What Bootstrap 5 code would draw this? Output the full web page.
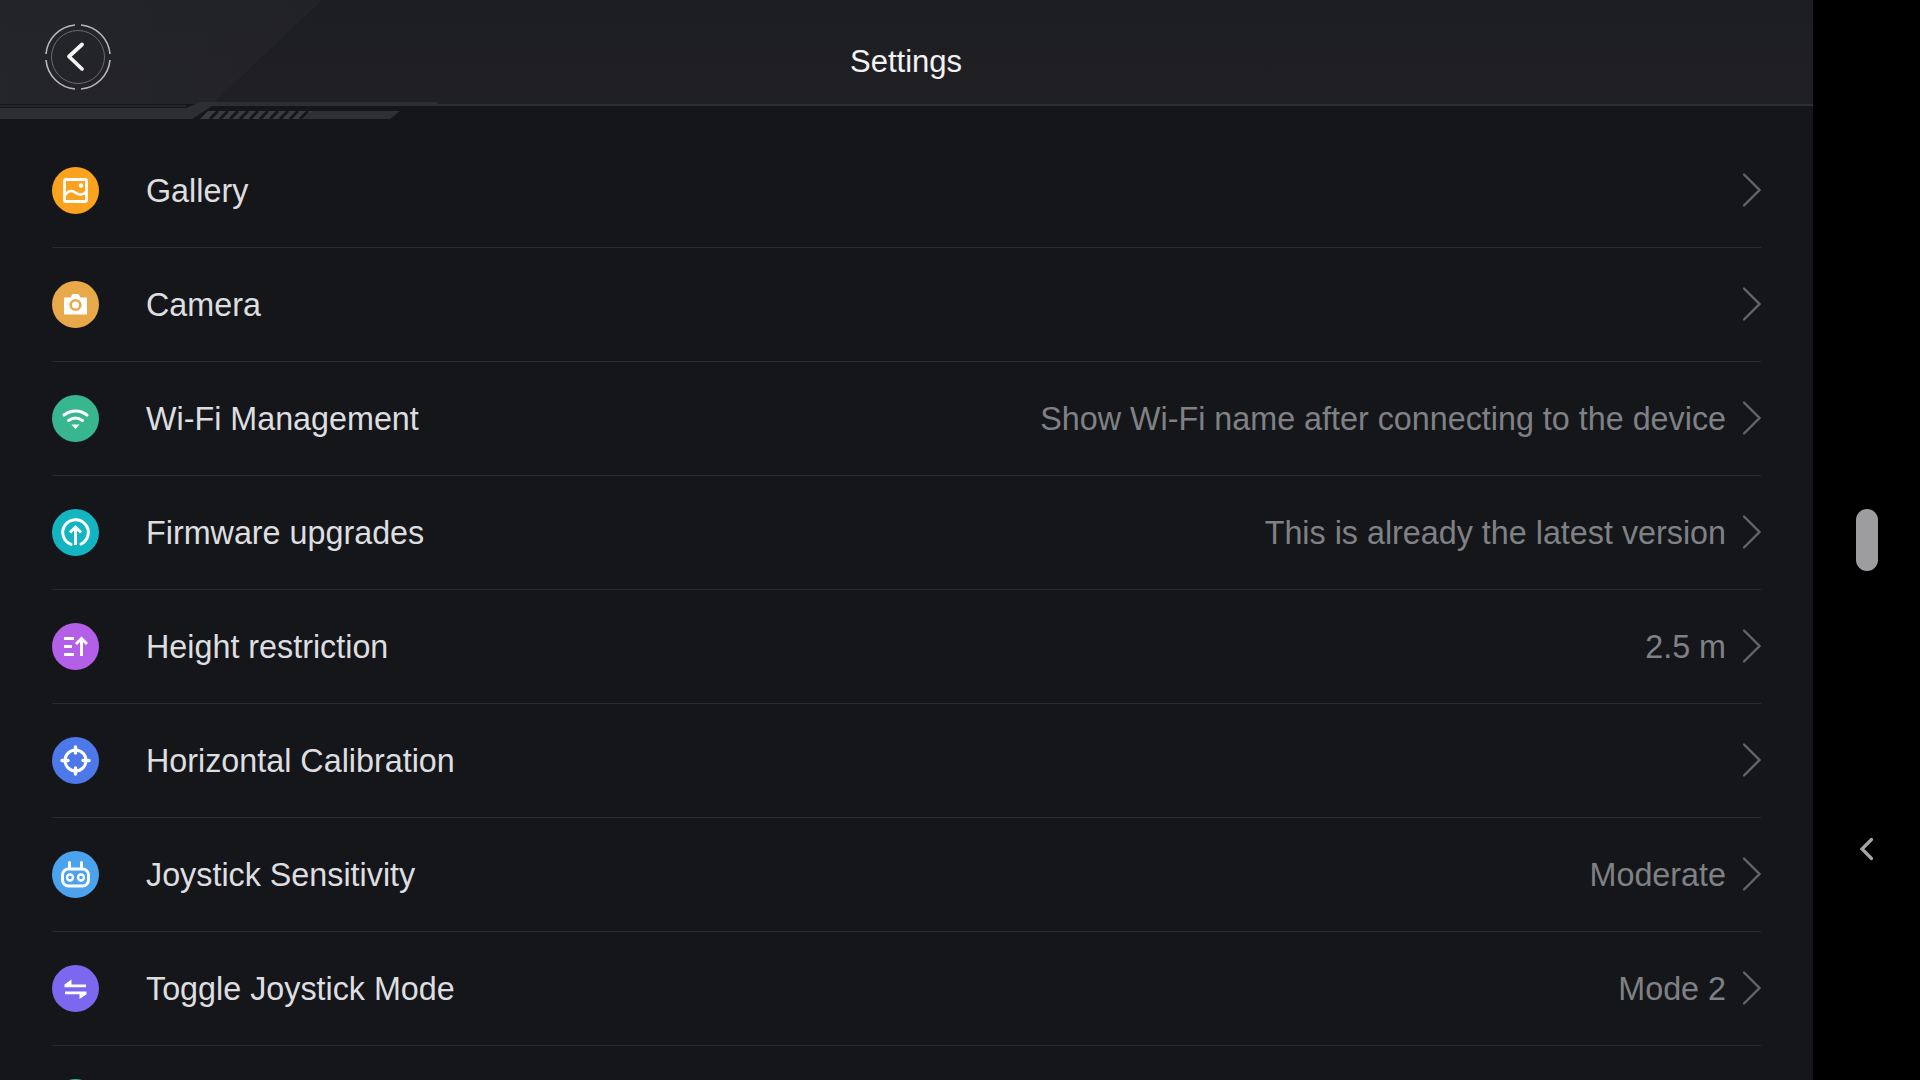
<!DOCTYPE html>
<html lang="en"><head><meta charset="utf-8"><title>Settings</title>
<link href="https://cdn.jsdelivr.net/npm/bootstrap@5.3.0/dist/css/bootstrap.min.css" rel="stylesheet">
<style>
html,body{height:1080px;overflow:hidden;background:#000;font-family:"Liberation Sans",Arial,sans-serif}
.app-shell{width:1920px;height:1080px}
.app-main{width:1813px;background:#15161a;height:1080px;overflow:hidden}
.top-bar{height:119px;position:relative;background:linear-gradient(#1d1e22,#202024 104px,#15161a 104px)}
.top-art{position:absolute;left:0;top:0;width:1813px;height:119px}
.back-btn{position:absolute;left:44px;top:23px;width:68px;height:68px}
.top-title{position:relative;text-align:center;font-size:31px;line-height:36px;color:#f2f2f3;padding-top:44px;padding-right:1px}
.rows{padding:15px 52px 0}
.set-row{height:114px;border-bottom:1px solid #2a2b2f;color:#dedee0;font-size:32.3px;padding-top:2px}
.set-ico{width:47px;height:47px;border-radius:50%;margin-right:47px;flex:none;margin-top:-2px}
.set-ico svg{width:47px;height:47px;display:block}
.set-val{color:#808185;margin-left:auto;margin-right:17px}
.set-chev{width:18px;height:34px;flex:none;margin-left:auto;margin-top:-4px}
.set-val + .set-chev{margin-left:0}
.side-bar{width:107px;position:relative}
.side-thumb{position:absolute;left:43px;top:509px;width:22px;height:62px;border-radius:11px;background:#9d9d9f}
.side-arrow{position:absolute;left:46px;top:837px;width:16px;height:24px}
</style></head><body>
<div class="app-shell d-flex">
<div class="app-main">
 <div class="top-bar">
  <svg class="top-art" viewBox="0 0 1813 119"><defs><linearGradient id="g" x1="0" x2="1"><stop offset="0" stop-color="#2a2b2e"/><stop offset="1" stop-color="#27272b"/></linearGradient></defs>
   <path d="M0 0H322L212 104H0Z" fill="url(#g)" opacity=".5"/>
   <path d="M0 108H186L200 102H437L438 104H1813V106H212L192 119H0Z" fill="#2d2e31"/>
   <path d="M0 105.500H186V106.500H0Z" fill="#36373a"/>
   <path d="M310 111H400L390 119H300Z" fill="#2f3033"/>
   <path d="M208 111H312L302 119H200Z" fill="#3a3b3e"/>
   <g stroke="#15161a" stroke-width="3"><path d="M210 119l8-8M220 119l8-8M230 119l8-8M240 119l8-8M250 119l8-8M260 119l8-8M270 119l8-8M280 119l8-8M290 119l8-8M300 119l8-8"/></g>
  </svg>
  <svg class="back-btn" viewBox="0 0 68 68" fill="none">
   <g stroke="#b9b9bb" stroke-width="1.6"><path d="M31 2A32 32 0 0 0 2 31M37 2A32 32 0 0 1 66 31M66 37A32 32 0 0 1 37 66M31 66A32 32 0 0 1 2 37"/></g>
   <circle cx="34" cy="34" r="26.500" stroke="#6a6a6d"/>
   <path d="M38 21.500L25 33.500l13 12.500" stroke="#f4f4f4" stroke-width="3.800" stroke-linecap="round" stroke-linejoin="round"/>
  </svg>
  <div class="top-title">Settings</div>
 </div>
 <div class="rows">
  <div class="set-row d-flex align-items-center">
   <span class="set-ico"><svg viewBox="0 0 47 47"><circle cx="23.500" cy="23.500" r="23.500" fill="#fba31f"/><rect x="12.500" y="12.500" width="22" height="22" rx="1.500" fill="none" stroke="#fff" stroke-width="2.800"/><circle cx="29" cy="18.500" r="2.200" fill="#fff"/><path d="M13 28c4-5 7-5 11-2s7 2 10-1" fill="none" stroke="#fff" stroke-width="2.600"/></svg></span>
   <span>Gallery</span>
   <svg class="set-chev" viewBox="0 0 18 34" fill="none"><path d="M1 1.500 16.500 17 1 32.500" stroke="#636468" stroke-width="2.400" stroke-linecap="round"/></svg>
  </div>
  <div class="set-row d-flex align-items-center">
   <span class="set-ico"><svg viewBox="0 0 47 47"><circle cx="23.500" cy="23.500" r="23.500" fill="#e8a94b"/><path d="M12 16.500h6.500l2-3.500h6l2 3.500H35v17H12Z" fill="#fff"/><circle cx="23.500" cy="24" r="4.800" fill="none" stroke="#e8a94b" stroke-width="2.600"/></svg></span>
   <span>Camera</span>
   <svg class="set-chev" viewBox="0 0 18 34" fill="none"><path d="M1 1.500 16.500 17 1 32.500" stroke="#636468" stroke-width="2.400" stroke-linecap="round"/></svg>
  </div>
  <div class="set-row d-flex align-items-center">
   <span class="set-ico"><svg viewBox="0 0 47 47"><circle cx="23.500" cy="23.500" r="23.500" fill="#38b78e"/><g fill="none" stroke="#fff" stroke-width="3" stroke-linecap="round"><path d="M12 20c7-5.500 16-5.500 23 0"/><path d="M16.500 25.500c4.500-3.200 9.500-3.200 14 0"/></g><path d="M19.500 29.500h8l-4 4.500Z" fill="#fff"/></svg></span>
   <span>Wi-Fi Management</span>
   <span class="set-val">Show Wi-Fi name after connecting to the device</span>
   <svg class="set-chev" viewBox="0 0 18 34" fill="none"><path d="M1 1.500 16.500 17 1 32.500" stroke="#636468" stroke-width="2.400" stroke-linecap="round"/></svg>
  </div>
  <div class="set-row d-flex align-items-center">
   <span class="set-ico"><svg viewBox="0 0 47 47"><circle cx="23.500" cy="23.500" r="23.500" fill="#13b5c0"/><path d="M29 35A12.800 12.800 0 1 0 19 35.400" fill="none" stroke="#fff" stroke-width="3" stroke-linecap="round"/><path d="M23.500 36V18M18 23.500l5.500-5.500 5.500 5.500" fill="none" stroke="#fff" stroke-width="3"/></svg></span>
   <span>Firmware upgrades</span>
   <span class="set-val">This is already the latest version</span>
   <svg class="set-chev" viewBox="0 0 18 34" fill="none"><path d="M1 1.500 16.500 17 1 32.500" stroke="#636468" stroke-width="2.400" stroke-linecap="round"/></svg>
  </div>
  <div class="set-row d-flex align-items-center">
   <span class="set-ico"><svg viewBox="0 0 47 47"><circle cx="23.500" cy="23.500" r="23.500" fill="#b45fe8"/><path d="M12 15.500h10M12 23.500h8M12 31.500h10" stroke="#fff" stroke-width="3"/><path d="M29.500 33V16M24 21l5.500-5.500 5.500 5.500" fill="none" stroke="#fff" stroke-width="3"/></svg></span>
   <span>Height restriction</span>
   <span class="set-val">2.5 m</span>
   <svg class="set-chev" viewBox="0 0 18 34" fill="none"><path d="M1 1.500 16.500 17 1 32.500" stroke="#636468" stroke-width="2.400" stroke-linecap="round"/></svg>
  </div>
  <div class="set-row d-flex align-items-center">
   <span class="set-ico"><svg viewBox="0 0 47 47"><circle cx="23.500" cy="23.500" r="23.500" fill="#4d78ea"/><circle cx="23.500" cy="23.500" r="10.500" fill="none" stroke="#fff" stroke-width="3"/><path d="M23.500 10v6M23.500 31v6M10 23.500h6M31 23.500h6" stroke="#fff" stroke-width="3.400" stroke-linecap="round"/></svg></span>
   <span>Horizontal Calibration</span>
   <svg class="set-chev" viewBox="0 0 18 34" fill="none"><path d="M1 1.500 16.500 17 1 32.500" stroke="#636468" stroke-width="2.400" stroke-linecap="round"/></svg>
  </div>
  <div class="set-row d-flex align-items-center">
   <span class="set-ico"><svg viewBox="0 0 47 47"><circle cx="23.500" cy="23.500" r="23.500" fill="#4ba3ee"/><rect x="10.500" y="18" width="26" height="17" rx="6" fill="none" stroke="#fff" stroke-width="3"/><path d="M17.500 17V11.500M29.500 17V11.500" stroke="#fff" stroke-width="3" stroke-linecap="round"/><circle cx="18" cy="26.500" r="3" fill="none" stroke="#fff" stroke-width="2.400"/><circle cx="29" cy="26.500" r="3" fill="none" stroke="#fff" stroke-width="2.400"/></svg></span>
   <span>Joystick Sensitivity</span>
   <span class="set-val">Moderate</span>
   <svg class="set-chev" viewBox="0 0 18 34" fill="none"><path d="M1 1.500 16.500 17 1 32.500" stroke="#636468" stroke-width="2.400" stroke-linecap="round"/></svg>
  </div>
  <div class="set-row d-flex align-items-center">
   <span class="set-ico"><svg viewBox="0 0 47 47"><circle cx="23.500" cy="23.500" r="23.500" fill="#7b68ee"/><path d="M12.500 19.500H34v2.800H12.500ZM12.500 19.500l7-5v5ZM13 26.500H34.500v2.800H13ZM34.500 29.300l-7 4.700v-4.700Z" fill="#fff"/></svg></span>
   <span>Toggle Joystick Mode</span>
   <span class="set-val">Mode 2</span>
   <svg class="set-chev" viewBox="0 0 18 34" fill="none"><path d="M1 1.500 16.500 17 1 32.500" stroke="#636468" stroke-width="2.400" stroke-linecap="round"/></svg>
  </div>
  <div class="set-row d-flex align-items-center">
   <span class="set-ico"><svg viewBox="0 0 47 47"><circle cx="23.500" cy="23.500" r="23.500" fill="#38b78e"/></svg></span>
  </div>
 </div>
</div>
<div class="side-bar">
 <div class="side-thumb"></div>
 <svg class="side-arrow" viewBox="0 0 16 24" fill="none"><path d="M12.500 2.500 3 12l9.500 9.500" stroke="#a5a5a7" stroke-width="3.200" stroke-linecap="round"/></svg>
</div>
</div>
</body></html>
